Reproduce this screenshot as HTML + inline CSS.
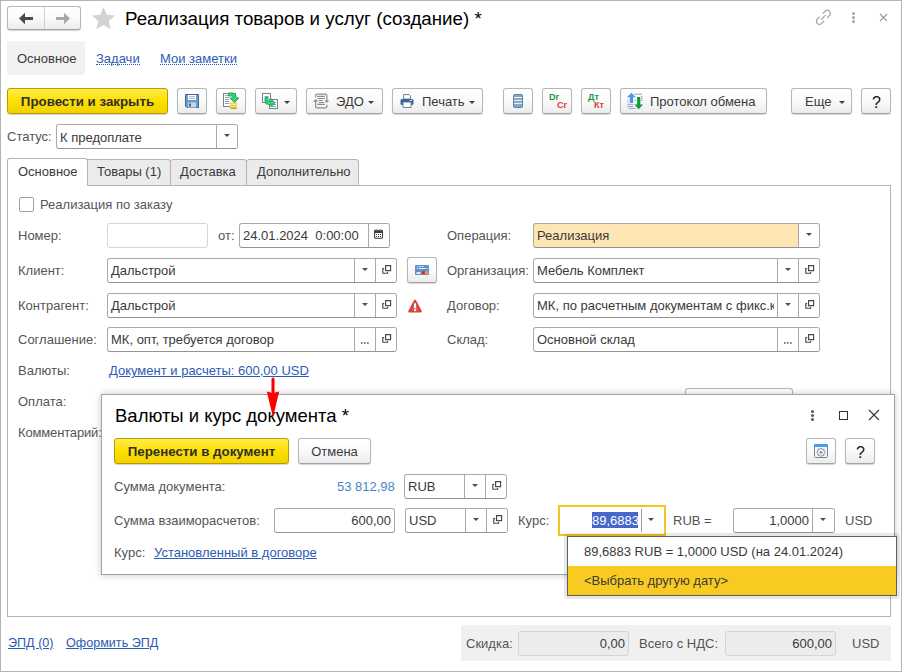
<!DOCTYPE html>
<html><head><meta charset="utf-8">
<style>
*{box-sizing:border-box;margin:0;padding:0}
html,body{width:902px;height:672px;overflow:hidden;background:#fff}
body{position:relative;font-family:"Liberation Sans",sans-serif;font-size:13px;color:#3a3a3a}
.a{position:absolute}
.t{position:absolute;line-height:15px;white-space:nowrap}
.lbl{color:#555}
.lnk{color:#2c5bb5;text-decoration:underline;text-underline-offset:1px}
.btn{position:absolute;border:1px solid #b7b7b7;border-bottom-color:#a3a3a3;border-radius:3px;background:linear-gradient(#ffffff 0%,#fbfbfb 45%,#ececec 100%);box-shadow:0 1px 1px rgba(0,0,0,.16)}
.ybtn{position:absolute;border:1px solid #b59d00;border-radius:3px;background:linear-gradient(#ffeb4d 0%,#ffe000 50%,#f1d200 100%);box-shadow:0 1px 1px rgba(0,0,0,.16);font-weight:bold;color:#2f2f2f;text-align:center;font-size:13.3px}
.fld{position:absolute;border:1px solid #a9a9a9;border-bottom-color:#939393;border-radius:3px;background:#fff;overflow:hidden}
.seg{position:absolute;top:0;bottom:0;border-left:1px solid #a9a9a9;background:#fff}
.tri{position:absolute;width:0;height:0;border-left:3.5px solid transparent;border-right:3.5px solid transparent;border-top:3.5px solid #4d4d4d}
.bdr{position:absolute;background:#b4b4b4}
</style></head><body>
<div class="bdr" style="left:0;top:0;width:902px;height:1px"></div>
<div class="bdr" style="left:0;top:0;width:1px;height:672px"></div>
<div class="bdr" style="left:901px;top:0;width:1px;height:672px"></div>
<div class="bdr" style="left:0;top:671px;width:902px;height:1px"></div>
<div class="btn" style="left:7px;top:6px;width:74px;height:24px;"></div>
<div class="a" style="left:44px;top:7px;width:1px;height:22px;background:#d0d0d0"></div>
<svg class="a" style="left:19px;top:12px" width="15" height="13" viewBox="0 0 15 13"><path d="M0 6.5 L6 0.8 V5 H14 V8 H6 V12.2 Z" fill="#4a4a4a"/></svg>
<svg class="a" style="left:55px;top:12px" width="15" height="13" viewBox="0 0 15 13"><path d="M15 6.5 L9 0.8 V5 H1 V8 H9 V12.2 Z" fill="#a8a8a8"/></svg>
<svg class="a" style="left:91px;top:7px" width="25" height="24" viewBox="0 0 25 24"><path d="M12.50,0.10 L15.79,7.77 L24.10,8.53 L17.83,14.03 L19.67,22.17 L12.50,17.90 L5.33,22.17 L7.17,14.03 L0.90,8.53 L9.21,7.77 Z" fill="#d3d3d3"/></svg>
<div class="t" style="left:125px;top:8px;color:#000;font-size:18.75px;line-height:21px">Реализация товаров и услуг (создание) *</div>
<svg class="a" style="left:812px;top:6px" width="24" height="24" viewBox="0 0 24 24"><g transform="translate(11.4,11.3) rotate(-45)" fill="none" stroke="#a4a4a4" stroke-width="1.2"><path d="M2.1 -3.1 H5.5 A3.1 3.1 0 0 1 5.5 3.1 H2.1"/><path d="M-2.1 3.1 H-5.5 A3.1 3.1 0 0 1 -5.5 -3.1 H-2.1"/><path d="M-3.1 0 H3.1"/></g></svg>
<div class="a" style="left:852px;top:12px;width:3px;height:3px;border-radius:50%;background:#a4a4a4"></div>
<div class="a" style="left:852px;top:16px;width:3px;height:3px;border-radius:50%;background:#a4a4a4"></div>
<div class="a" style="left:852px;top:20px;width:3px;height:3px;border-radius:50%;background:#a4a4a4"></div>
<svg class="a" style="left:879px;top:13px" width="9" height="9" viewBox="0 0 9 9"><path d="M1 1 L8 8 M8 1 L1 8" stroke="#999" stroke-width="1.1"/></svg>
<div class="a" style="left:7px;top:41px;width:78px;height:34px;background:#f2f2f2;border-radius:3px"></div>
<div class="t" style="left:17px;top:51px;color:#3a3a3a;">Основное</div>
<div class="t" style="left:96px;top:51px;color:#2c5bb5;border-bottom:1px dotted #2c5bb5;line-height:11px;top:53px">Задачи</div>
<div class="t" style="left:160px;top:51px;color:#2c5bb5;border-bottom:1px dotted #2c5bb5;line-height:11px;top:53px">Мои заметки</div>
<div class="ybtn" style="left:7px;top:88px;width:161px;height:26px;line-height:25px">Провести и закрыть</div>
<div class="btn" style="left:177px;top:88px;width:30px;height:26px;"></div>
<svg class="a" style="left:185px;top:94px" width="14" height="14" viewBox="0 0 14 14"><path d="M0.5 0.5 H13.5 V13.5 H2 L0.5 12 Z" fill="#6d9bd1" stroke="#3f6796"/><rect x="3" y="1" width="8" height="5" fill="#fff"/><path d="M4 2.7H10M4 4.3H10" stroke="#8aa9cc" stroke-width="0.8"/><rect x="3" y="8.5" width="8" height="5" fill="#ccd6de"/><rect x="4" y="9.5" width="2" height="3" fill="#3f6796"/></svg>
<div class="btn" style="left:216px;top:88px;width:30px;height:26px;"></div>
<svg class="a" style="left:222px;top:92px" width="18" height="18" viewBox="0 0 18 18"><rect x="1.5" y="1.5" width="12" height="13" fill="#fff" stroke="#70869f"/><path d="M3 3.5H6M3 5.5H7.5M3 7.5H7.5M3 9.5H7.5M3 11.5H7.5" stroke="#8ea2b8" stroke-width="1"/><rect x="8.3" y="10.5" width="6.7" height="5.5" fill="#e2c52e"/><ellipse cx="11.65" cy="16" rx="3.35" ry="1.2" fill="#d4b21a"/><ellipse cx="11.65" cy="10.5" rx="3.35" ry="1.2" fill="#f6e68a"/><path d="M8.3 12.5H15M8.3 14.5H15" stroke="#fbf0a0" stroke-width="0.9"/><path d="M6.5 1 H10.5 A3.5 3.5 0 0 1 14 4.5 V6 H17 L12.5 10.5 L8 6 H11 V5 A1 1 0 0 0 10 4 H6.5 Z" fill="#35d47c" stroke="#14a24e" stroke-width="0.9" stroke-linejoin="round"/></svg>
<div class="btn" style="left:255px;top:88px;width:42px;height:26px;"></div>
<svg class="a" style="left:261px;top:92px" width="18" height="18" viewBox="0 0 18 18"><rect x="1.5" y="1.5" width="8" height="9" fill="#fff" stroke="#70869f"/><path d="M3.5 4.5H7.5" stroke="#8ea2b8" stroke-width="1"/><rect x="8.5" y="7.5" width="8" height="9" fill="#fff" stroke="#70869f"/><path d="M11 10.5H15M12 12.5H15M11 14.5H15" stroke="#8ea2b8" stroke-width="1"/><path d="M4 5.4 H7 V8.5 A1 1 0 0 0 8 9.5 H10 V6.5 L13.8 10.8 L10 15 V12.5 H7.5 A3.5 3.5 0 0 1 4 9 Z" fill="#35d47c" stroke="#14a24e" stroke-width="0.9" stroke-linejoin="round"/></svg>
<div class="tri" style="left:284px;top:101px;border-left-width:3px;border-right-width:3px;border-top-width:3px;border-top-color:#404040"></div>
<div class="btn" style="left:306px;top:88px;width:77px;height:26px;"></div>
<svg class="a" style="left:312px;top:93px" width="18" height="16" viewBox="0 0 18 16"><g fill="none" stroke="#8c8c8c" stroke-width="1.2"><path d="M3.6 4.2 V2.6 A1.5 1.5 0 0 1 5.1 1.1 H13.4 A1.5 1.5 0 0 1 14.9 2.6 V7.3"/><path d="M3.6 8.5 V13.4 A1.5 1.5 0 0 0 5.1 14.9 H13.4 A1.5 1.5 0 0 0 14.9 13.4 V11.8"/></g><path d="M5.2 3.4 H12.9 M5.2 5.5 H12.9 M6.4 7.5 H10.8 M6.7 9.5 H12.1 M5.2 11.4 H12.9" stroke="#8c8c8c" stroke-width="1.1"/><path d="M1 8.7 L3.6 6 L6.2 8.7 Z" fill="#8c8c8c"/><path d="M12.3 7.2 L17.2 7.2 L14.8 9.9 Z" fill="#8c8c8c"/></svg>
<div class="t" style="left:336px;top:94px;color:#3a3a3a;">ЭДО</div>
<div class="tri" style="left:368px;top:101px;border-left-width:3px;border-right-width:3px;border-top-width:3px;border-top-color:#404040"></div>
<div class="btn" style="left:392px;top:88px;width:91px;height:26px;"></div>
<svg class="a" style="left:400px;top:94px" width="14" height="14" viewBox="0 0 14 14"><path d="M3.5 0.5 H9 L10.5 2 V5 H3.5 Z" fill="#fff" stroke="#5d7a9a" stroke-width="0.9"/><rect x="0.5" y="5" width="13" height="6" rx="1.5" fill="#3f6b9b"/><path d="M1.5 7H12.5" stroke="#24466e" stroke-width="0.8"/><rect x="9.5" y="6" width="1" height="1" fill="#fff"/><rect x="11" y="6" width="1" height="1" fill="#fff"/><rect x="3" y="8" width="8" height="5.5" fill="#fff" stroke="#5d7a9a" stroke-width="0.9"/></svg>
<div class="t" style="left:422px;top:94px;color:#3a3a3a;">Печать</div>
<div class="tri" style="left:469px;top:101px;border-left-width:3px;border-right-width:3px;border-top-width:3px;border-top-color:#404040"></div>
<div class="btn" style="left:503px;top:88px;width:30px;height:26px;"></div>
<svg class="a" style="left:513px;top:94px" width="10" height="14" viewBox="0 0 10 14"><rect x="0.5" y="0.5" width="9" height="13" rx="1.5" fill="#87a8c6" stroke="#5d7fa1"/><path d="M1 3.5H9M1 6.5H9M1 9.5H9" stroke="#e9f0f6" stroke-width="1"/></svg>
<div class="btn" style="left:542px;top:88px;width:30px;height:26px;"></div>
<div class="t" style="left:549px;top:92px;color:#1c9a3c;font-size:9px;line-height:10px;font-weight:bold">Dr</div>
<div class="t" style="left:557px;top:100px;color:#e0383c;font-size:9px;line-height:10px;font-weight:bold">Cr</div>
<div class="btn" style="left:581px;top:88px;width:30px;height:26px;"></div>
<div class="t" style="left:588px;top:92px;color:#1c9a3c;font-size:9px;line-height:10px;font-weight:bold">Дт</div>
<div class="t" style="left:594px;top:100px;color:#e0383c;font-size:9px;line-height:10px;font-weight:bold">Кт</div>
<div class="btn" style="left:620px;top:88px;width:147px;height:26px;"></div>
<svg class="a" style="left:626px;top:92px" width="18" height="18" viewBox="0 0 18 18"><path d="M8.2 2.2H16M15 4.4H16.7M15 6.5H16.7M15 8.4H16.7M1.3 8.4H2.6M1.3 10.2H2.6M8.2 8.4H9.8M1.3 12.4H7.4M1.3 14.5H7.4M2.9 16.4H9.8" stroke="#8aa0ba" stroke-width="0.9"/><path d="M5.4 0.8 L9.9 5.2 H7.1 V10.9 H3.8 V5.2 H1 Z" fill="#4c98ee"/><path d="M12.7 17.2 L17.1 12.6 H14.3 V4.9 H11.1 V12.6 H8.3 Z" fill="#15993b"/></svg>
<div class="t" style="left:650px;top:94px;color:#3a3a3a;">Протокол обмена</div>
<div class="btn" style="left:791px;top:88px;width:61px;height:26px;"></div>
<div class="t" style="left:805px;top:94px;color:#3a3a3a;">Еще</div>
<div class="tri" style="left:839px;top:101px;border-left-width:3px;border-right-width:3px;border-top-width:3px;border-top-color:#404040"></div>
<div class="btn" style="left:861px;top:88px;width:30px;height:26px;"></div>
<div class="t" style="left:872px;top:94px;color:#111;font-size:16px;line-height:18px">?</div>
<div class="t" style="left:7px;top:129px;color:#555555;">Статус:</div>
<div class="fld" style="left:56px;top:124px;width:182px;height:25px;background:#fff;"><div class="t" style="left:3px;top:5px;color:#3a3a3a">К предоплате</div><div class="seg" style="right:0px;width:21px"><div class="tri" style="left:7px;top:9px"></div></div></div>
<div class="a" style="left:7px;top:185px;width:884px;height:432px;border:1px solid #b4b4b4"></div>
<div class="a" style="left:87px;top:159px;width:84px;height:27px;background:#ebebeb;border:1px solid #b4b4b4;border-left:none;border-radius:0 3px 0 0"></div>
<div class="a" style="left:170px;top:159px;width:77px;height:27px;background:#ebebeb;border:1px solid #b4b4b4;border-radius:3px 3px 0 0"></div>
<div class="a" style="left:246px;top:159px;width:113px;height:27px;background:#ebebeb;border:1px solid #b4b4b4;border-radius:3px 3px 0 0"></div>
<div class="a" style="left:7px;top:158px;width:81px;height:28px;background:#fff;border:1px solid #b4b4b4;border-bottom:none;border-radius:3px 3px 0 0"></div>
<div class="t" style="left:18px;top:164px;color:#3a3a3a;">Основное</div>
<div class="t" style="left:97px;top:164px;color:#3a3a3a;">Товары (1)</div>
<div class="t" style="left:180px;top:164px;color:#3a3a3a;">Доставка</div>
<div class="t" style="left:257px;top:164px;color:#3a3a3a;">Дополнительно</div>
<div class="a" style="left:19px;top:197px;width:15px;height:15px;border:1px solid #a0a0a0;border-radius:2px;background:#fff"></div>
<div class="t" style="left:40px;top:197px;color:#555555;">Реализация по заказу</div>
<div class="t" style="left:18px;top:228px;color:#555555;">Номер:</div>
<div class="fld" style="left:107px;top:223px;width:101px;height:25px;border-color:#d6d6d6;border-radius:3px"></div>
<div class="t" style="left:218px;top:228px;color:#555555;">от:</div>
<div class="fld" style="left:239px;top:223px;width:151px;height:25px;background:#fff;"><div class="t" style="left:3px;top:4px;color:#3a3a3a">24.01.2024&nbsp;&nbsp;0:00:00</div><div class="seg" style="right:0px;width:21px"><svg class="a" style="left:4px;top:5px" width="11" height="11" viewBox="0 0 11 11"><rect x="1.6" y="1.6" width="7.9" height="7.7" rx="1" fill="#fff" stroke="#3f3f3f" stroke-width="1.1"/><rect x="1.1" y="1.1" width="8.9" height="2.9" rx="0.8" fill="#3f3f3f"/><circle cx="3.5" cy="1" r="0.85" fill="#fff" stroke="#3f3f3f" stroke-width="0.6"/><circle cx="7.5" cy="1" r="0.85" fill="#fff" stroke="#3f3f3f" stroke-width="0.6"/><g fill="#3f3f3f"><rect x="3" y="5" width="1" height="1"/><rect x="5" y="5" width="1" height="1"/><rect x="7" y="5" width="1" height="1"/><rect x="3" y="7" width="1" height="1"/><rect x="5" y="7" width="1" height="1"/><rect x="7" y="7" width="1" height="1"/></g></svg></div></div>
<div class="t" style="left:18px;top:263px;color:#555555;">Клиент:</div>
<div class="fld" style="left:107px;top:258px;width:290px;height:25px;background:#fff;"><div class="t" style="left:3px;top:4px;color:#3a3a3a">Дальстрой</div><div class="seg" style="right:21px;width:21px"><div class="tri" style="left:7px;top:9px"></div></div><div class="seg" style="right:0px;width:21px"><svg class="a" style="left:5px;top:5px" width="11" height="11" viewBox="0 0 11 11"><path d="M4.6 1.6H9.6V6.6H4.6Z M3.2 4.6H1.8V9.2H6.6V8" fill="none" stroke="#4a4a4a" stroke-width="1.15"/></svg></div></div>
<div class="btn" style="left:407px;top:257px;width:30px;height:26px;"></div>
<svg class="a" style="left:415px;top:265px" width="14" height="10" viewBox="0 0 14 10"><rect x="0" y="0" width="14" height="10" rx="1" fill="#5f93cc"/><path d="M2 1.5H9" stroke="#cfe0f2" stroke-width="0.7"/><path d="M2 3.5H13" stroke="#f2f7fc" stroke-width="1" stroke-dasharray="1 1 6 0.5"/><rect x="1.5" y="7" width="4" height="2" fill="#dfe9f4"/><circle cx="8.6" cy="7.6" r="1.7" fill="#ee1c1c"/><circle cx="11.4" cy="7.6" r="1.7" fill="#f7a823"/><circle cx="10" cy="7.6" r="0.9" fill="#f85f12"/></svg>
<div class="t" style="left:18px;top:298px;color:#555555;">Контрагент:</div>
<div class="fld" style="left:107px;top:293px;width:290px;height:25px;background:#fff;"><div class="t" style="left:3px;top:4px;color:#3a3a3a">Дальстрой</div><div class="seg" style="right:21px;width:21px"><div class="tri" style="left:7px;top:9px"></div></div><div class="seg" style="right:0px;width:21px"><svg class="a" style="left:5px;top:5px" width="11" height="11" viewBox="0 0 11 11"><path d="M4.6 1.6H9.6V6.6H4.6Z M3.2 4.6H1.8V9.2H6.6V8" fill="none" stroke="#4a4a4a" stroke-width="1.15"/></svg></div></div>
<svg class="a" style="left:407px;top:299px" width="16" height="15" viewBox="0 0 16 15"><path d="M8 1.9 L13.6 12.3 H2.4 Z" fill="#e65848" stroke="#d4483a" stroke-linejoin="round" stroke-width="2.4"/><rect x="7" y="4.3" width="2.1" height="5" fill="#fff"/><rect x="7" y="10.3" width="2.1" height="1.8" fill="#fff"/></svg>
<div class="t" style="left:18px;top:332px;color:#555555;">Соглашение:</div>
<div class="fld" style="left:107px;top:327px;width:290px;height:25px;background:#fff;"><div class="t" style="left:3px;top:4px;color:#3a3a3a">МК, опт, требуется договор</div><div class="seg" style="right:21px;width:21px"><svg class="a" style="left:5px;top:13px" width="10" height="3" viewBox="0 0 10 3"><g fill="#505050"><circle cx="1.8" cy="1.9" r="0.85"/><circle cx="4.8" cy="1.9" r="0.85"/><circle cx="7.9" cy="1.9" r="0.85"/></g></svg></div><div class="seg" style="right:0px;width:21px"><svg class="a" style="left:5px;top:5px" width="11" height="11" viewBox="0 0 11 11"><path d="M4.6 1.6H9.6V6.6H4.6Z M3.2 4.6H1.8V9.2H6.6V8" fill="none" stroke="#4a4a4a" stroke-width="1.15"/></svg></div></div>
<div class="t" style="left:18px;top:363px;color:#555555;">Валюты:</div>
<div class="t lnk" style="left:109px;top:363px;color:#2c5bb5;">Документ и расчеты: 600,00 USD</div>
<div class="t" style="left:18px;top:394px;color:#555555;">Оплата:</div>
<div class="t" style="left:18px;top:425px;color:#555555;letter-spacing:-0.15px">Комментарий:</div>
<div class="t" style="left:447px;top:228px;color:#555555;">Операция:</div>
<div class="fld" style="left:533px;top:223px;width:287px;height:25px;background:#fde6b4;"><div class="t" style="left:3px;top:4px;color:#3a3a3a">Реализация</div><div class="seg" style="right:0px;width:21px"><div class="tri" style="left:7px;top:9px"></div></div></div>
<div class="t" style="left:447px;top:263px;color:#555555;">Организация:</div>
<div class="fld" style="left:533px;top:258px;width:287px;height:25px;background:#fff;"><div class="t" style="left:3px;top:4px;color:#3a3a3a">Мебель Комплект</div><div class="seg" style="right:21px;width:21px"><div class="tri" style="left:7px;top:9px"></div></div><div class="seg" style="right:0px;width:21px"><svg class="a" style="left:5px;top:5px" width="11" height="11" viewBox="0 0 11 11"><path d="M4.6 1.6H9.6V6.6H4.6Z M3.2 4.6H1.8V9.2H6.6V8" fill="none" stroke="#4a4a4a" stroke-width="1.15"/></svg></div></div>
<div class="t" style="left:447px;top:298px;color:#555555;">Договор:</div>
<div class="fld" style="left:533px;top:293px;width:287px;height:25px;background:#fff;"><div class="t" style="left:3px;top:4px;color:#3a3a3a"><span style="display:inline-block;width:237px;overflow:hidden;vertical-align:top">МК, по расчетным документам с фикс.курсом</span></div><div class="seg" style="right:21px;width:21px"><div class="tri" style="left:7px;top:9px"></div></div><div class="seg" style="right:0px;width:21px"><svg class="a" style="left:5px;top:5px" width="11" height="11" viewBox="0 0 11 11"><path d="M4.6 1.6H9.6V6.6H4.6Z M3.2 4.6H1.8V9.2H6.6V8" fill="none" stroke="#4a4a4a" stroke-width="1.15"/></svg></div></div>
<div class="t" style="left:447px;top:332px;color:#555555;">Склад:</div>
<div class="fld" style="left:533px;top:327px;width:287px;height:25px;background:#fff;"><div class="t" style="left:3px;top:4px;color:#3a3a3a">Основной склад</div><div class="seg" style="right:21px;width:21px"><svg class="a" style="left:5px;top:13px" width="10" height="3" viewBox="0 0 10 3"><g fill="#505050"><circle cx="1.8" cy="1.9" r="0.85"/><circle cx="4.8" cy="1.9" r="0.85"/><circle cx="7.9" cy="1.9" r="0.85"/></g></svg></div><div class="seg" style="right:0px;width:21px"><svg class="a" style="left:5px;top:5px" width="11" height="11" viewBox="0 0 11 11"><path d="M4.6 1.6H9.6V6.6H4.6Z M3.2 4.6H1.8V9.2H6.6V8" fill="none" stroke="#4a4a4a" stroke-width="1.15"/></svg></div></div>
<div class="btn" style="left:685px;top:388px;width:108px;height:26px;"></div>
<div class="a" style="left:101px;top:394px;width:794px;height:181px;background:#fff;border:1px solid #a3a3a3;box-shadow:0 0 7px rgba(0,0,0,.22)"></div>
<div class="t" style="left:115px;top:405px;color:#000;font-size:18.5px;line-height:21px">Валюты и курс документа *</div>
<div class="a" style="left:811px;top:410px;width:3px;height:3px;border-radius:50%;background:#555"></div>
<div class="a" style="left:811px;top:414px;width:3px;height:3px;border-radius:50%;background:#555"></div>
<div class="a" style="left:811px;top:418px;width:3px;height:3px;border-radius:50%;background:#555"></div>
<div class="a" style="left:839px;top:411px;width:9px;height:9px;border:1.5px solid #333"></div>
<svg class="a" style="left:868px;top:409px" width="12" height="12" viewBox="0 0 12 12"><path d="M1 1 L11 11 M11 1 L1 11" stroke="#333" stroke-width="1.1"/></svg>
<div class="ybtn" style="left:114px;top:438px;width:175px;height:26px;line-height:25px">Перенести в документ</div>
<div class="btn" style="left:298px;top:438px;width:73px;height:26px;text-align:center;line-height:25px;color:#3a3a3a">Отмена</div>
<div class="btn" style="left:806px;top:438px;width:30px;height:26px;"></div>
<svg class="a" style="left:814px;top:444px" width="14" height="14" viewBox="0 0 14 14"><rect x="0.5" y="1" width="13" height="12.5" rx="1" fill="#f4f5f6" stroke="#728496"/><rect x="0" y="0" width="14" height="3" rx="1" fill="#4a9be9"/><path d="M11.20,8.30 L10.05,9.56 L9.97,11.27 L8.26,11.35 L7.00,12.50 L5.74,11.35 L4.03,11.27 L3.95,9.56 L2.80,8.30 L3.95,7.04 L4.03,5.33 L5.74,5.25 L7.00,4.10 L8.26,5.25 L9.97,5.33 L10.05,7.04 Z" fill="none" stroke="#7d8895" stroke-width="1" stroke-linejoin="round"/><circle cx="7" cy="8.3" r="1.4" fill="#8a949f"/></svg>
<div class="btn" style="left:845px;top:438px;width:30px;height:26px;"></div>
<div class="t" style="left:856px;top:444px;color:#111;font-size:16px;line-height:18px">?</div>
<div class="t" style="left:114px;top:479px;color:#555555;">Сумма документа:</div>
<div class="t" style="left:337px;top:479px;color:#4a86c8;">53 812,98</div>
<div class="fld" style="left:404px;top:474px;width:103px;height:25px;background:#fff;"><div class="t" style="left:3px;top:4px;color:#3a3a3a">RUB</div><div class="seg" style="right:21px;width:21px"><div class="tri" style="left:7px;top:9px"></div></div><div class="seg" style="right:0px;width:21px"><svg class="a" style="left:5px;top:5px" width="11" height="11" viewBox="0 0 11 11"><path d="M4.6 1.6H9.6V6.6H4.6Z M3.2 4.6H1.8V9.2H6.6V8" fill="none" stroke="#4a4a4a" stroke-width="1.15"/></svg></div></div>
<div class="t" style="left:114px;top:513px;color:#555555;">Сумма взаиморасчетов:</div>
<div class="fld" style="left:274px;top:508px;width:121px;height:25px;background:#fff;"><div class="t" style="right:3px;top:4px;color:#3a3a3a">600,00</div></div>
<div class="fld" style="left:405px;top:508px;width:103px;height:25px;background:#fff;"><div class="t" style="left:3px;top:4px;color:#3a3a3a">USD</div><div class="seg" style="right:21px;width:21px"><div class="tri" style="left:7px;top:9px"></div></div><div class="seg" style="right:0px;width:21px"><svg class="a" style="left:5px;top:5px" width="11" height="11" viewBox="0 0 11 11"><path d="M4.6 1.6H9.6V6.6H4.6Z M3.2 4.6H1.8V9.2H6.6V8" fill="none" stroke="#4a4a4a" stroke-width="1.15"/></svg></div></div>
<div class="t" style="left:518px;top:513px;color:#555555;">Курс:</div>
<div class="a" style="left:558px;top:505px;width:108px;height:31px;border:2px solid #f5c51c"></div>
<div class="a" style="left:592px;top:512px;width:46px;height:16px;background:#4767cb"></div>
<div class="t" style="left:592px;top:513px;color:#fff;">89,6883</div>
<div class="a" style="left:641px;top:509px;width:1px;height:23px;background:#9a9a9a"></div>
<div class="tri" style="left:648px;top:518px;border-left-width:3.5px;border-right-width:3.5px;border-top-width:3.5px;border-top-color:#4d4d4d"></div>
<div class="t" style="left:673px;top:513px;color:#555555;">RUB =</div>
<div class="fld" style="left:733px;top:508px;width:102px;height:25px;background:#fff;"><div class="t" style="right:25px;top:4px;color:#3a3a3a">1,0000</div><div class="seg" style="right:0px;width:22px"><div class="tri" style="left:7px;top:9px"></div></div></div>
<div class="t" style="left:845px;top:513px;color:#555555;">USD</div>
<div class="t" style="left:114px;top:545px;color:#555555;">Курс:</div>
<div class="t lnk" style="left:154px;top:545px;color:#2c5bb5;">Установленный в договоре</div>
<svg class="a" style="left:264px;top:376px" width="18" height="43" viewBox="0 0 18 43"><path d="M9 3 V16" stroke="#ff0000" stroke-width="3" stroke-linecap="round"/><path d="M2.8 15.5 L9 17 L15.2 15.5 L9 41.5 Z" fill="#ff0000"/></svg>
<div class="a" style="left:564px;top:533px;width:336px;height:66px;background:rgba(0,0,0,.09);border-radius:4px"></div>
<div class="a" style="left:567px;top:536px;width:330px;height:60px;background:#fff;border:1px solid #5f5f5f"></div>
<div class="a" style="left:568px;top:566px;width:328px;height:29px;background:#f9cb21"></div>
<div class="t" style="left:584px;top:544px;color:#3a3a3a;">89,6883 RUB = 1,0000 USD (на 24.01.2024)</div>
<div class="t" style="left:584px;top:573px;color:#3a3a3a;">&lt;Выбрать другую дату&gt;</div>
<div class="t lnk" style="left:8px;top:636px;color:#2c5bb5;font-size:12.6px">ЭПД (0)</div>
<div class="t lnk" style="left:66px;top:636px;color:#2c5bb5;font-size:12.6px">Оформить ЭПД</div>
<div class="a" style="left:461px;top:625px;width:430px;height:36px;background:#f0f0f0"></div>
<div class="t" style="left:466px;top:636px;color:#555555;">Скидка:</div>
<div class="fld" style="left:518px;top:631px;width:111px;height:25px;background:#ececec;border-color:#d4d4d4"><div class="t" style="right:3px;top:4px;color:#3a3a3a">0,00</div></div>
<div class="t" style="left:639px;top:636px;color:#555555;">Всего с НДС:</div>
<div class="fld" style="left:725px;top:631px;width:111px;height:25px;background:#ececec;border-color:#d4d4d4"><div class="t" style="right:3px;top:4px;color:#3a3a3a">600,00</div></div>
<div class="t" style="left:852px;top:636px;color:#555555;">USD</div>
</body></html>
